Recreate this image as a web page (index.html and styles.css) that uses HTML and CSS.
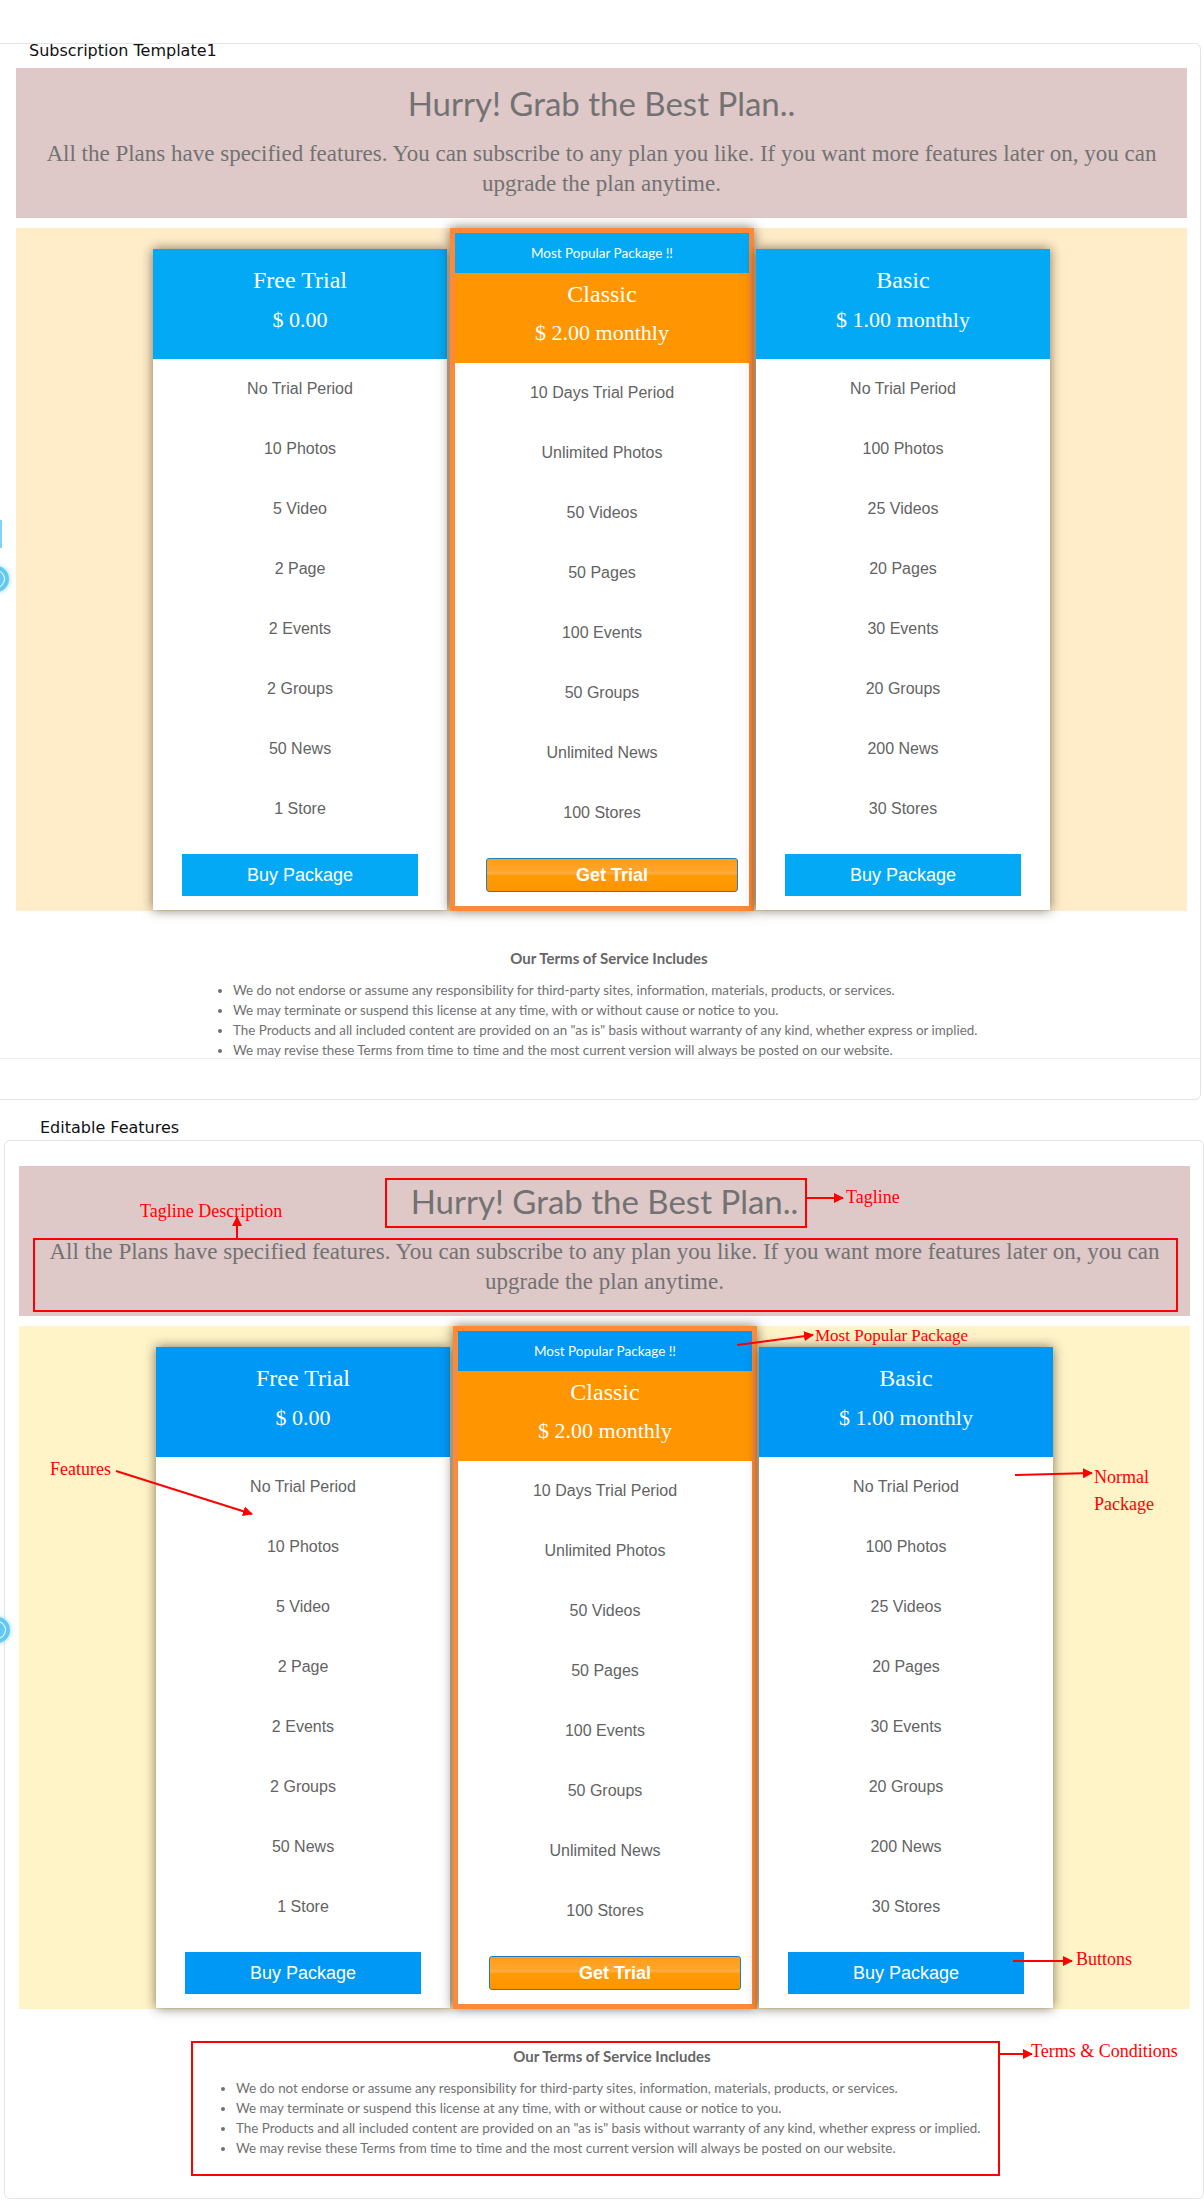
FILE: index.html
```html
<!DOCTYPE html>
<html lang="en">
<head>
<meta charset="utf-8">
<title>Subscription Template</title>
<link rel="stylesheet" href="styles.css">
</head>
<body>
<div class="page">
  <section class="panel panel--first">
    <h2 class="panel-title">Subscription Template1</h2>
    <div class="frame">
      <div class="template">
        <div class="tagline-box">
          <h1 class="tagline">Hurry! Grab the Best Plan..</h1>
          <p class="tagline-desc">All the Plans have specified features. You can subscribe to any plan you like. If you want more features later on, you can upgrade the plan anytime.</p>
        </div>
        <div class="plans">
          <div class="plan">
            <div class="plan-head"><div class="plan-name">Free Trial</div><div class="plan-price">$ 0.00</div></div>
            <ul class="features"><li>No Trial Period</li><li>10 Photos</li><li>5 Video</li><li>2 Page</li><li>2 Events</li><li>2 Groups</li><li>50 News</li><li>1 Store</li></ul>
            <div class="plan-foot"><a class="btn-buy" href="#">Buy Package</a></div>
          </div>
          <div class="plan plan--popular">
            <div class="popular-badge">Most Popular Package !!</div>
            <div class="plan-head"><div class="plan-name">Classic</div><div class="plan-price">$ 2.00 monthly</div></div>
            <ul class="features"><li>10 Days Trial Period</li><li>Unlimited Photos</li><li>50 Videos</li><li>50 Pages</li><li>100 Events</li><li>50 Groups</li><li>Unlimited News</li><li>100 Stores</li></ul>
            <div class="plan-foot"><a class="btn-trial" href="#">Get Trial</a></div>
          </div>
          <div class="plan plan--last">
            <div class="plan-head"><div class="plan-name">Basic</div><div class="plan-price">$ 1.00 monthly</div></div>
            <ul class="features"><li>No Trial Period</li><li>100 Photos</li><li>25 Videos</li><li>20 Pages</li><li>30 Events</li><li>20 Groups</li><li>200 News</li><li>30 Stores</li></ul>
            <div class="plan-foot"><a class="btn-buy" href="#">Buy Package</a></div>
          </div>
        </div>
        <div class="terms">
          <h3 class="terms-title">Our Terms of Service Includes</h3>
          <ul class="terms-list">
            <li>We do not endorse or assume any responsibility for third-party sites, information, materials, products, or services.</li>
            <li>We may terminate or suspend this license at any time, with or without cause or notice to you.</li>
            <li>The Products and all included content are provided on an "as is" basis without warranty of any kind, whether express or implied.</li>
            <li>We may revise these Terms from time to time and the most current version will always be posted on our website.</li>
          </ul>
        </div>
      </div>
    </div>
  </section>

  <div class="section-label">Editable Features</div>

  <section class="panel panel--second">
    <div class="template template--alt">
      <div class="tagline-box">
        <h1 class="tagline">Hurry! Grab the Best Plan..</h1>
        <p class="tagline-desc">All the Plans have specified features. You can subscribe to any plan you like. If you want more features later on, you can upgrade the plan anytime.</p>
      </div>
      <div class="plans">
        <div class="plan">
          <div class="plan-head"><div class="plan-name">Free Trial</div><div class="plan-price">$ 0.00</div></div>
          <ul class="features"><li>No Trial Period</li><li>10 Photos</li><li>5 Video</li><li>2 Page</li><li>2 Events</li><li>2 Groups</li><li>50 News</li><li>1 Store</li></ul>
          <div class="plan-foot"><a class="btn-buy" href="#">Buy Package</a></div>
        </div>
        <div class="plan plan--popular">
          <div class="popular-badge">Most Popular Package !!</div>
          <div class="plan-head"><div class="plan-name">Classic</div><div class="plan-price">$ 2.00 monthly</div></div>
          <ul class="features"><li>10 Days Trial Period</li><li>Unlimited Photos</li><li>50 Videos</li><li>50 Pages</li><li>100 Events</li><li>50 Groups</li><li>Unlimited News</li><li>100 Stores</li></ul>
          <div class="plan-foot"><a class="btn-trial" href="#">Get Trial</a></div>
        </div>
        <div class="plan plan--last">
          <div class="plan-head"><div class="plan-name">Basic</div><div class="plan-price">$ 1.00 monthly</div></div>
          <ul class="features"><li>No Trial Period</li><li>100 Photos</li><li>25 Videos</li><li>20 Pages</li><li>30 Events</li><li>20 Groups</li><li>200 News</li><li>30 Stores</li></ul>
          <div class="plan-foot"><a class="btn-buy" href="#">Buy Package</a></div>
        </div>
      </div>
      <div class="terms">
        <h3 class="terms-title">Our Terms of Service Includes</h3>
        <ul class="terms-list">
          <li>We do not endorse or assume any responsibility for third-party sites, information, materials, products, or services.</li>
          <li>We may terminate or suspend this license at any time, with or without cause or notice to you.</li>
          <li>The Products and all included content are provided on an "as is" basis without warranty of any kind, whether express or implied.</li>
          <li>We may revise these Terms from time to time and the most current version will always be posted on our website.</li>
        </ul>
      </div>
    </div>
  </section>

  <!-- floating widget, cut off at the left edge -->
  <div class="widget-bar"></div>
  <div class="widget-dot widget-dot--one"></div>
  <div class="widget-dot widget-dot--two"></div>

  <!-- annotation overlay -->
  <div class="mark mark--tagline"></div>
  <div class="mark mark--desc"></div>
  <div class="mark mark--terms"></div>

  <svg class="arrows" width="1204" height="2211" viewBox="0 0 1204 2211">
    <defs>
      <marker id="head" viewBox="0 0 10 10" refX="9" refY="5" markerWidth="5" markerHeight="5" orient="auto">
        <path d="M0 0 L10 5 L0 10 Z" fill="#ff0000"/>
      </marker>
    </defs>
    <g stroke="#ff0000" stroke-width="2" fill="none" marker-end="url(#head)">
      <line x1="807" y1="1198" x2="843" y2="1198"/>
      <line x1="237" y1="1238" x2="237" y2="1217"/>
      <line x1="737" y1="1345" x2="813" y2="1335"/>
      <line x1="116" y1="1471" x2="252" y2="1514"/>
      <line x1="1015" y1="1475" x2="1092" y2="1473"/>
      <line x1="1013" y1="1961" x2="1072" y2="1961"/>
      <line x1="1000" y1="2054" x2="1032" y2="2054"/>
    </g>
  </svg>

  <div class="note note--tagline">Tagline</div>
  <div class="note note--desc">Tagline Description</div>
  <div class="note note--popular">Most Popular Package</div>
  <div class="note note--features">Features</div>
  <div class="note note--normal">Normal<br>Package</div>
  <div class="note note--buttons">Buttons</div>
  <div class="note note--terms">Terms &amp; Conditions</div>
</div>
</body>
</html>
```

FILE: styles.css
```css
* { box-sizing: border-box; }

body {
  margin: 0;
  background: #ffffff;
}

.page {
  position: relative;
  width: 1204px;
  padding: 43px 0 11px;
  overflow: hidden;
}

/* ---------- panels ---------- */
.panel {
  background: #ffffff;
  border: 1px solid #e4e4e4;
  border-radius: 6px;
}

.panel--first {
  width: 1201px;
  border-left: none;
  border-top-left-radius: 0;
  border-bottom-left-radius: 0;
  padding: 0 13px 40px 16px;
}

.panel-title {
  margin: 0 0 10px 13px;
  font: 400 16px/14px "DejaVu Sans", sans-serif;
  color: #111;
}

.frame {
  height: 991px;
  overflow: hidden;
  border-bottom: 1px solid #ececec;
  margin: 0 -13px 0 -16px;
  padding: 0 13px 0 16px;
}

.section-label {
  margin: 19px 0 3px 40px;
  font: 400 16px/18px "DejaVu Sans", sans-serif;
  color: #111;
}

.panel--second {
  width: 1200px;
  margin-left: 4px;
  padding: 25px 13px 23px 14px;
}

/* ---------- tagline ---------- */
.tagline-box {
  height: 150px;
  padding: 15px 15px 0;
  background: #dec8c8;
  text-align: center;
}

.tagline {
  margin: 0;
  font: 400 33px/40px Lato, sans-serif;
  color: #727272;
}

.tagline-desc {
  margin: 16px 0 0;
  font: 400 23px/30px "Liberation Serif", serif;
  color: #727272;
}

/* ---------- plans ---------- */
.plans {
  margin-top: 10px;
  height: 683px;
  background: #ffecc9;
  display: flex;
  justify-content: center;
  align-items: flex-start;
}

.plan {
  width: 294px;
  margin-top: 21px;
  background: #ffffff;
  box-shadow: 0 0 11px rgba(40, 30, 10, 0.6);
}

.plan--popular {
  width: 304px;
  margin: 0 0 0 3px;
  border: 5px solid #fd8a3a;
}

.plan--last {
  margin-left: 2px;
}

.popular-badge {
  height: 40px;
  background: #03a9f4;
  color: #ffffff;
  font: 400 13.5px/40px Lato, sans-serif;
  text-align: center;
}

.plan-head {
  height: 110px;
  padding-top: 16px;
  background: #03a9f4;
  color: #ffffff;
  text-align: center;
  font-family: "Liberation Serif", serif;
}

.plan-name {
  font-size: 24px;
  line-height: 30px;
}

.plan-price {
  margin-top: 10px;
  font-size: 22px;
  line-height: 30px;
}

.plan--popular .plan-head {
  height: 90px;
  padding-top: 6px;
  background: #ff9500;
}

.plan--popular .plan-price {
  margin-top: 9px;
}

.features {
  list-style: none;
  margin: 0;
  padding: 0;
}

.features li {
  height: 60px;
  text-align: center;
  font: 400 16px/60px "Liberation Sans", Arial, sans-serif;
  color: #636363;
}

.plan-foot {
  padding: 15px 0 14px;
}

.btn-buy {
  display: block;
  width: 236px;
  height: 42px;
  margin: 0 auto;
  background: #03a9f4;
  color: #ffffff;
  text-align: center;
  text-decoration: none;
  font: 400 18px/42px "Liberation Sans", Arial, sans-serif;
}

.btn-trial {
  display: block;
  width: 252px;
  height: 34px;
  margin-left: 31px;
  border: 1px solid #1f80bf;
  border-radius: 3px;
  background: linear-gradient(#ff9f17 0%, #ffa52c 38%, #ffae47 44%, #ff9a05 52%, #ff9500 100%);
  color: #ffffff;
  text-align: center;
  text-decoration: none;
  font: 700 18px/32px "Liberation Sans", Arial, sans-serif;
}

/* ---------- terms ---------- */
.terms {
  width: 809px;
  margin: 31px 0 0 172px;
  padding: 6px 0 17px;
}

.terms-title {
  margin: 0;
  padding-left: 33px;
  text-align: center;
  font: 700 15px/20px Lato, sans-serif;
  color: #666666;
}

.terms-list {
  margin: 12px 0 0;
  padding-left: 45px;
  font: 400 13.4px/20px Lato, sans-serif;
  color: #717171;
}

/* ---------- second variant colours ---------- */
.template--alt .plans { background: #fff3c8; }
.template--alt .plan-head,
.template--alt .popular-badge,
.template--alt .btn-buy { background: #0098f5; }
.template--alt .plan--popular .plan-head { background: #ff9500; }

/* ---------- floating widget (cut off) ---------- */
.widget-bar {
  position: absolute;
  left: -1px;
  top: 520px;
  width: 3px;
  height: 28px;
  background: #7fd3f7;
}

.widget-dot {
  position: absolute;
  width: 26px;
  height: 26px;
  border-radius: 50%;
  background: #62c9f5;
  box-shadow: 0 0 5px rgba(98, 201, 245, 0.7), inset 0 0 0 4px #62c9f5, inset 0 0 0 5px #ffffff;
}

.widget-dot--one { left: -17px; top: 566px; }
.widget-dot--two { left: -16px; top: 1617px; }

/* ---------- annotations ---------- */
.mark {
  position: absolute;
  border: 2px solid #ff0000;
}

.mark--tagline { left: 385px; top: 1178px; width: 422px; height: 50px; }
.mark--desc { left: 33px; top: 1238px; width: 1145px; height: 74px; }
.mark--terms { left: 191px; top: 2041px; width: 809px; height: 135px; }

.arrows {
  position: absolute;
  left: 0;
  top: 0;
  pointer-events: none;
}

.note {
  position: absolute;
  color: #ff0000;
  font: 400 18px/20px "Liberation Serif", serif;
  white-space: nowrap;
}

.note--tagline { left: 846px; top: 1187px; }
.note--desc { left: 140px; top: 1201px; }
.note--popular { left: 815px; top: 1326px; font-size: 17px; }
.note--features { left: 50px; top: 1459px; }
.note--normal { left: 1094px; top: 1464px; line-height: 27px; }
.note--buttons { left: 1076px; top: 1949px; }
.note--terms { left: 1031px; top: 2041px; }
```
